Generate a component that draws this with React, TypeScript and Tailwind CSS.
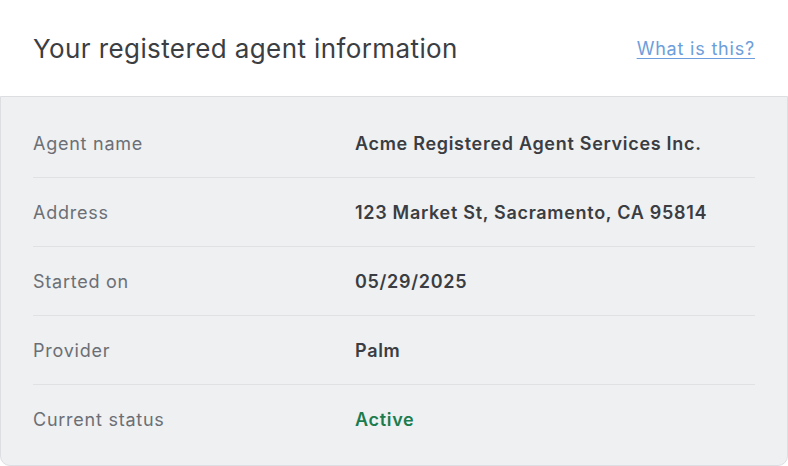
const rows: { label: string; value: string; green?: boolean }[] = [
  { label: "Agent name", value: "Acme Registered Agent Services Inc." },
  { label: "Address", value: "123 Market St, Sacramento, CA 95814" },
  { label: "Started on", value: "05/29/2025" },
  { label: "Provider", value: "Palm" },
  { label: "Current status", value: "Active", green: true },
];

export default function App() {
  return (
    <div className="w-[788px] h-[466px] bg-white font-['Inter',sans-serif]">
      {/* Header */}
      <div className="h-[96px] flex items-center justify-between pl-[33px] pr-[33px]">
        <h2 className="text-[26px] text-[#3b3e43] tracking-[0.4px]">Your registered agent information</h2>
        <a href="#" className="text-[18px] text-[#6d9edb] tracking-[0.8px] underline underline-offset-[3px] decoration-1">
          What is this?
        </a>
      </div>

      {/* Details panel */}
      <div className="h-[370px] bg-[#eff0f2] border border-[#dcdee2] rounded-b-[10px] px-[32px] pt-[12px]">
        {rows.map((row, i) => (
          <div
            key={row.label}
            className={`h-[69px] grid grid-cols-[322px_1fr] items-center ${i < rows.length - 1 ? "border-b border-[#dfe1e4]" : ""}`}
          >
            <span className="text-[18px] text-[#6b6f75] tracking-[0.75px]">{row.label}</span>
            <span className={`text-[18px] font-semibold tracking-[0.7px] ${row.green ? "text-[#1b7c4e]" : "text-[#3a3d42]"}`}>
              {row.value}
            </span>
          </div>
        ))}
      </div>
    </div>
  );
}
